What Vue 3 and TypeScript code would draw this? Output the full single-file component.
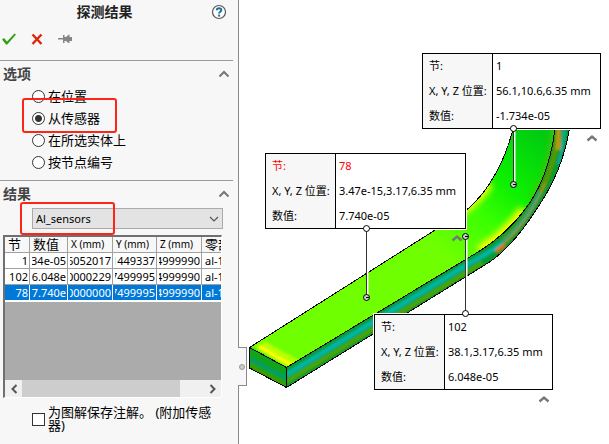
<script setup lang="ts">
import { ref } from 'vue'

interface Row { node: string; value: string; x: string; y: string; z: string; part: string }
interface Callout { node: string; pos: string; value: string; left: number; top: number; width: number; active?: boolean }

const modes = ['在位置', '从传感器', '在所选实体上', '按节点编号']
const mode = ref('从传感器')
const sensor = ref('Al_sensors')
const saveNotes = ref(false)
const selected = ref('78')

const rows: Row[] = [
  { node: '1', value: '34e-05', x: '6052017', y: '1449337', z: '4999990', part: 'al-1' },
  { node: '102', value: '6.048e', x: '0000229', y: '7499995', z: '4999990', part: 'al-1' },
  { node: '78', value: '7.740e', x: '0000000', y: '7499995', z: '4999990', part: 'al-1' },
]

const callouts: Callout[] = [
  { node: '1', pos: '56.1,10.6,6.35 mm', value: '-1.734e-05', left: 183, top: 53, width: 179 },
  { node: '78', pos: '3.47e-15,3.17,6.35 mm', value: '7.740e-05', left: 26, top: 153, width: 201, active: true },
  { node: '102', pos: '38.1,3.17,6.35 mm', value: '6.048e-05', left: 135, top: 314, width: 179 },
]

const chevrons = [[592, 138], [457, 238], [544, 399]]
const leaders = [
  { x1: 513, y1: 129, x2: 513, y2: 184 },
  { x1: 366, y1: 229, x2: 366, y2: 297 },
  { x1: 465, y1: 314, x2: 465, y2: 236 },
]
</script>

<template>
  <main class="app">
    <aside class="panel">
      <header class="title">
        <h1>探测结果</h1>
        <button class="icon help" aria-label="帮助">
          <svg width="16" height="16" viewBox="0 0 16 16">
            <circle cx="8" cy="8" r="6.5" fill="#fff" stroke="#555" stroke-width="1.2" />
            <path d="M5.8 6.3C5.8 3.4 10.3 3.5 10.3 6.1C10.3 7.7 8.1 7.7 8.1 9.6" fill="none" stroke="#1b6f98" stroke-width="2" />
            <rect x="7.1" y="10.6" width="2" height="2" fill="#1b6f98" />
          </svg>
        </button>
      </header>
      <div class="actions">
        <button class="icon" aria-label="确定">
          <svg width="16" height="14" viewBox="0 0 16 14"><path d="M1 7.500L3 6L6 9.500L13.500 1.500L15 2.500L6.300 12.500H5Z" fill="#36a015" /></svg>
        </button>
        <button class="icon" aria-label="取消">
          <svg width="12" height="14" viewBox="0 0 12 14"><path d="M1.500 2.500L10.500 12M10.500 2.500L1.500 12" stroke="#e02408" stroke-width="2.400" /></svg>
        </button>
        <button class="icon" aria-label="保持可见">
          <svg width="16" height="14" viewBox="0 0 16 14"><path d="M1 6H6V3H7.500V5H9L11.500 3V2.500H12.500V5H15V9H12.500V11H11.500L9 9H7.500V11H6V7.500H1Z" fill="#858585" /></svg>
        </button>
      </div>

      <section class="group">
        <div class="heading">
          <h2>选项</h2>
          <button class="icon" aria-label="折叠选项"><svg width="12" height="8" viewBox="0 0 12 8"><path d="M1.5 6.5L6 2L10.5 6.5" fill="none" stroke="#777" stroke-width="2" /></svg></button>
        </div>
        <div class="radios">
          <label v-for="m in modes" :key="m"><input v-model="mode" type="radio" name="mode" :value="m">{{ m }}</label>
          <span class="mark mark-mode"></span>
        </div>
      </section>

      <section class="group">
        <div class="heading">
          <h2>结果</h2>
          <button class="icon" aria-label="折叠结果"><svg width="12" height="8" viewBox="0 0 12 8"><path d="M1.5 6.5L6 2L10.5 6.5" fill="none" stroke="#777" stroke-width="2" /></svg></button>
        </div>
        <div class="picker">
          <select v-model="sensor" aria-label="传感器"><option>Al_sensors</option></select>
          <svg class="drop" width="10" height="8" viewBox="0 0 10 8"><path d="M1 2L5 6L9 2" fill="none" stroke="#555" stroke-width="1.2" /></svg>
          <span class="mark mark-sensor"></span>
        </div>
        <div class="grid">
          <div class="rows">
            <table>
              <colgroup><col class="c-node"><col class="c-value"><col class="c-pos"><col class="c-y"><col class="c-pos"><col></colgroup>
              <thead>
                <tr><th class="zh">节</th><th class="zh">数值</th><th>X (mm)</th><th>Y (mm)</th><th>Z (mm)</th><th class="zh">零部件</th></tr>
              </thead>
              <tbody>
                <tr v-for="r in rows" :key="r.node" :class="{ selected: r.node === selected }" @click="selected = r.node">
                  <td><div class="end">{{ r.node }}</div></td>
                  <td><div class="end">{{ r.value }}</div></td>
                  <td><div class="end">{{ r.x }}</div></td>
                  <td><div class="end">{{ r.y }}</div></td>
                  <td><div class="end">{{ r.z }}</div></td>
                  <td><div class="start">{{ r.part }}</div></td>
                </tr>
              </tbody>
            </table>
          </div>
          <div class="scroll">
            <button class="icon" aria-label="向左滚动"><svg width="8" height="10" viewBox="0 0 8 10"><path d="M6.5 1L2.5 5L6.5 9" fill="none" stroke="#555" stroke-width="2" /></svg></button>
            <div class="track"><div class="thumb"></div></div>
            <button class="icon" aria-label="向右滚动"><svg width="8" height="10" viewBox="0 0 8 10"><path d="M1.5 1L5.5 5L1.5 9" fill="none" stroke="#555" stroke-width="2" /></svg></button>
          </div>
        </div>
        <label class="save"><input v-model="saveNotes" type="checkbox"><span>为图解保存注解。 (附加传感器)</span></label>
      </section>
    </aside>

    <section class="stage">
      <button class="handle" aria-label="折叠面板"><span></span></button>
      <svg class="model" width="370" height="444" viewBox="239 0 370 444">
        <defs>
          <clipPath id="top"><path d="M249.500 347.500L466 210.500C491 190 506 157 513 129H555C551 161 541 190 523 212C509 230 494 242 478 252L286.500 367.500Z" /></clipPath>
          <clipPath id="side"><path d="M286.500 367.500L478 252C494 242 509 230 523 212C541 190 551 161 555 129H569.500C564 161 551 188 538 207C521 234 505 252 488 263L286.500 387.500Z" /></clipPath>
          <clipPath id="end"><path d="M249.500 347.500L286.500 367.500V387.500L249.500 368Z" /></clipPath>
          <linearGradient id="skin" gradientUnits="userSpaceOnUse" x1="440" y1="250" x2="540" y2="130">
            <stop offset="0" stop-color="#70ff00" /><stop offset=".35" stop-color="#38ff00" /><stop offset=".6" stop-color="#0cf000" /><stop offset="1" stop-color="#00ca12" />
          </linearGradient>
          <filter id="soft" filterUnits="userSpaceOnUse" x="239" y="110" width="370" height="300"><feGaussianBlur stdDeviation="1.2" /></filter>
          <filter id="softer" filterUnits="userSpaceOnUse" x="239" y="110" width="370" height="300"><feGaussianBlur stdDeviation="3" /></filter>
        </defs>
        <g clip-path="url(#top)">
          <rect x="239" y="120" width="340" height="270" fill="url(#skin)" />
          <g fill="none" filter="url(#soft)">
            <path d="M248 347L282 366" stroke="#00d830" stroke-width="3" />
            <path d="M262 345L296 364" stroke="#b8ff00" stroke-width="9" />
            <path d="M258 346L292 366" stroke="#ffff00" stroke-width="4" />
          </g>
          <g fill="none" filter="url(#softer)">
            <path d="M480 251C500 239 514 225 524 210" stroke="#ffff00" stroke-width="11" />
            <path d="M532 200C545 180 552 158 555 125" stroke="#4ac010" stroke-width="6" />
            <path d="M460 213C472 204 482 195 489 184" stroke="#f4ff00" stroke-width="9" />
          </g>
        </g>
        <g clip-path="url(#side)">
          <rect x="270" y="120" width="310" height="280" fill="#0a9a32" />
          <g fill="none" filter="url(#soft)">
            <path d="M286 375L470 263C480 257 492 252 503 242" stroke="#00b5a5" stroke-width="5" />
            <path d="M286 382L482 263" stroke="#4fa600" stroke-width="4" />
            <path d="M286 391L489 268" stroke="#00ad70" stroke-width="4" />
            <path d="M503 240C527 220 546 188 553 160C556 150 558 135 559 125" stroke="#559800" stroke-width="5" />
            <path d="M497 250C518 234 535 209 545 183" stroke="#b18b20" stroke-width="2" />
            <path d="M500 244C517 230 531 212 540 192" stroke="#08a890" stroke-width="2" />
            <path d="M558 165C563 150 564 139 565 125" stroke="#08a9a0" stroke-width="3" />
            <path d="M558 150L559 127" stroke="#b8980c" stroke-width="5" />
            <path d="M496 252L505 245" stroke="#e07010" stroke-width="4" />
          </g>
        </g>
        <g clip-path="url(#end)">
          <rect x="245" y="340" width="45" height="50" fill="#12a418" />
          <g fill="none" filter="url(#soft)">
            <path d="M248 358L288 379" stroke="#009d72" stroke-width="4" />
            <path d="M248 365L288 387" stroke="#389e00" stroke-width="6" />
          </g>
        </g>
        <g fill="none" stroke="#000" stroke-width="1" shape-rendering="crispEdges">
          <path d="M513 129C506 157 491 190 466 210.500L249.500 347.500V368L286.500 387.500L488 263C505 252 521 234 538 207C551 188 564 161 569.500 129" />
          <path d="M249.500 347.500L286.500 367.500V387.500M286.500 367.500L478 252C494 242 509 230 523 212C541 190 551 161 555 129" />
        </g>
      </svg>

      <table v-for="c in callouts" :key="c.node" class="callout" :class="{ active: c.active }" :style="{ left: c.left + 'px', top: c.top + 'px', width: c.width + 'px' }">
        <tbody>
          <tr class="node"><th>节:</th><td>{{ c.node }}</td></tr>
          <tr><th>X, Y, Z 位置:</th><td>{{ c.pos }}</td></tr>
          <tr><th>数值:</th><td>{{ c.value }}</td></tr>
        </tbody>
      </table>

      <svg class="model overlay" width="370" height="444" viewBox="239 0 370 444">
        <g v-for="l in leaders" :key="l.x1">
          <path :d="`M${l.x1 + 1.5} ${l.y1}V${l.y2}`" stroke="#fff" stroke-width="2" />
          <path :d="`M${l.x1 + 0.5} ${l.y1}V${l.y2}`" stroke="#333" stroke-width="1" />
          <circle :cx="l.x1 + 0.5" :cy="l.y1 - 0.5" r="3" fill="#fff" stroke="#000" />
          <circle :cx="l.x1 + 0.5" :cy="l.y2 + 0.5" r="3" fill="#ccc" stroke="#000" />
          <path :d="`M${l.x1} ${l.y2 + 0.5}h3`" stroke="#000" />
        </g>
        <path v-for="p in chevrons" :key="p[0]" :d="`M${p[0] - 4.5} ${p[1] + 2.5}l4.500 -4l4.500 4`" fill="none" stroke="#777" stroke-width="2.4" />
      </svg>
    </section>
  </main>
</template>

<style>
body { margin: 0; background: #fff; }
</style>

<style scoped>
* { box-sizing: border-box; }
.app { display: flex; min-height: 100vh; font: 13px/16px "Noto Sans", "Noto Sans CJK SC", sans-serif; color: #000; overflow: hidden; }
.panel { flex: 0 0 239px; padding-right: 5px; background: #f7f7f7; border-right: 1px solid #8a8a8a; }
.icon { display: flex; align-items: center; justify-content: center; padding: 0; border: 0; background: none; }
.title { position: relative; display: flex; align-items: center; justify-content: center; height: 24px; }
h1 { margin: 0; padding-right: 24px; font-size: 14px; line-height: 20px; color: #222; }
.help { position: absolute; right: 6px; top: 4px; }
.actions { display: flex; gap: 14px; height: 36px; padding: 8px 1px; align-items: flex-start; }
.group { border-top: 1px solid #999; }
.heading { display: flex; align-items: center; justify-content: space-between; height: 24px; padding: 2px 3px 0; }
h2 { margin: 0; font-size: 14px; line-height: 20px; color: #444; }
.radios { position: relative; padding: 0 0 7px 32px; }
.radios label { display: flex; align-items: center; gap: 3px; height: 22px; }
input { appearance: none; flex: none; margin: 0; width: 13px; height: 13px; background: #fff; border: 1px solid #333; }
.radios input { border-radius: 50%; }
.radios input:checked { background: radial-gradient(circle, #333 0 3px, #fff 4px); }
.mark { position: absolute; border: 2px solid #ff2416; border-radius: 3px; pointer-events: none; }
.mark-mode { left: 22px; top: 13px; width: 95px; height: 35px; }
.picker { position: relative; margin: 3px 10px 0 32px; height: 21px; }
select { appearance: none; display: block; width: 100%; height: 21px; padding: 0 3px; border: 1px solid #aaa; border-radius: 0; background: #e3e3e3; color: #000; font: 11px/18px "Noto Sans", sans-serif; }
.drop { position: absolute; right: 4px; top: 7px; }
.mark-sensor { left: -12px; top: -6px; width: 95px; height: 33px; }
.grid { margin: 6px 11px 0 3px; border: 2px solid #707070; border-right: 1px solid #fff; border-bottom: 1px solid #fff; }
.rows { height: 143px; overflow: hidden; background: #ababab; }
.rows table { width: 100%; table-layout: fixed; border-collapse: separate; border-spacing: 0; border-bottom: 1px solid #fff; background: #fff; font-size: 11px; line-height: 15px; }
.c-node { width: 25px; }
.c-value { width: 38px; }
.c-pos { width: 45px; }
.c-y { width: 44px; }
.rows th, .rows td { padding: 0; height: 16px; border-right: 1px solid #a0a0a0; border-bottom: 1px solid #a0a0a0; overflow: hidden; white-space: nowrap; }
.rows th:last-child, .rows td:last-child { border-right: 0; }
.rows th { padding-left: 3px; font-size: 10px; font-weight: 400; text-align: left; background: #f7f7f7; }
.rows th.zh { font-size: 13px; }
.rows td > div { display: flex; overflow: hidden; }
.end { justify-content: flex-end; margin: 0 1px 0 2px; }
.start { margin-left: 3px; }
.rows .selected td { background: #0078d7; color: #fff; border-color: #fff; }
.scroll { display: flex; height: 17px; background: #f0f0f0; }
.scroll .icon { flex: 0 0 17px; }
.track { flex: 1; }
.thumb { width: 87%; height: 100%; background: #cdcdcd; }
.save { display: flex; align-items: center; gap: 3px; padding: 8px 16px 9px 32px; line-height: 13px; }
.stage { position: relative; flex: 1; min-width: 0; background: #fff; }
.model { position: absolute; left: 0; top: 0; }
.overlay { pointer-events: none; }
.handle { position: absolute; left: -1px; top: 347px; width: 9px; height: 39px; padding: 0; border: 1px solid #8a8a8a; border-left: 0; background: #f7f7f7; display: flex; align-items: center; justify-content: center; }
.handle span { width: 6px; height: 6px; border: 1px solid #999; border-radius: 50%; background: #ccc; }
.callout { position: absolute; height: 76px; table-layout: fixed; border-collapse: collapse; border: 1px solid #000; outline: 1px solid #fff; background: #fff; font-size: 11px; line-height: 16px; white-space: nowrap; }
.callout th { width: 70px; padding: 0 0 0 6px; border-right: 1px solid #000; background: #f7f7f7; text-align: left; font-weight: 400; }
.callout td { padding: 0 0 0 3px; }
.active .node { color: #f00; }
</style>
